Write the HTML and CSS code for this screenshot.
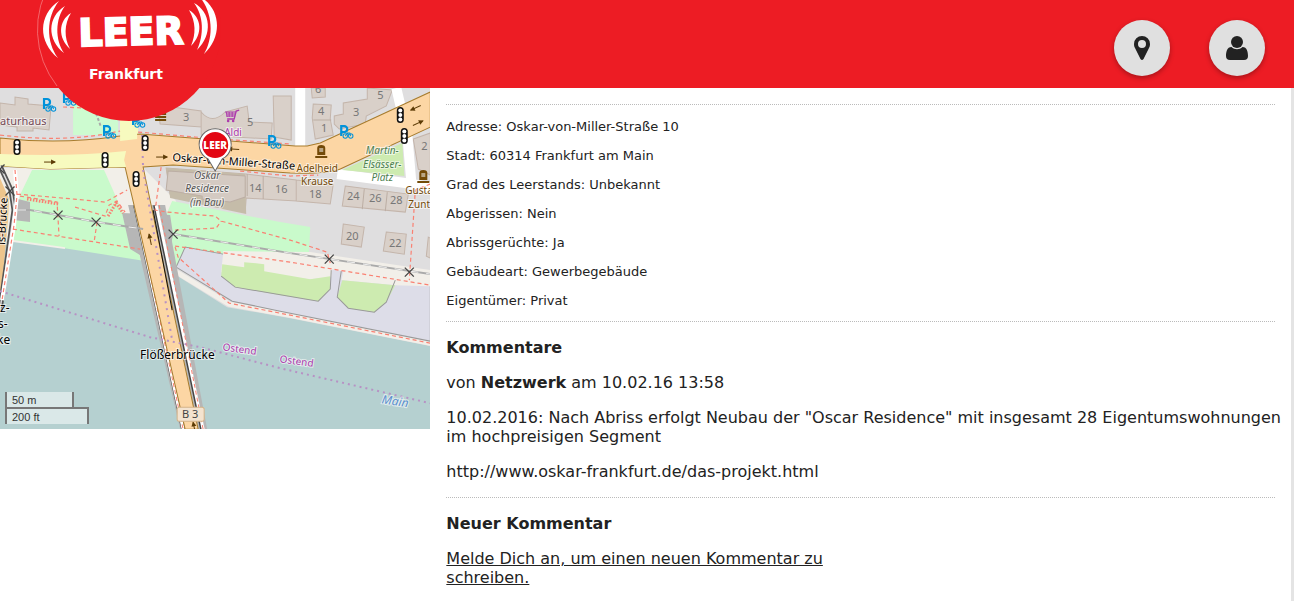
FILE: index.html
```html
<!DOCTYPE html>
<html lang="de">
<head>
<meta charset="utf-8">
<meta name="viewport" content="width=device-width, initial-scale=1">
<title>Leerstandsmelder Frankfurt</title>
<link rel="stylesheet" href="styles.css">
</head>
<body>
<header class="topbar">
  <a class="logo" href="#" aria-label="Leer Frankfurt">
    <svg class="logo-image" viewBox="37 -63 184 184">
      <circle cx="129" cy="29" r="92" fill="#ed1c24"/>
      <path d="M52-20A91.500 91.500 0 0 0 57 86" fill="none" stroke="#f6868b" stroke-width=".7"/>
      <g fill="#fff">
        <path d="M59 1C38 15 38 42 58 58C46 42 46 17 59 1Z"/>
        <path d="M65 6C47 17 47 40 64 53C55 40 55 19 65 6Z"/>
        <path d="M71 13C58 21 58 38 70 49C64 38 64 24 71 13Z"/>
        <path d="M199-4C221 8 223 36 204 54C214 37 213 12 199-4Z"/>
        <path d="M194 3C211 12 213 35 197 50C204 35 204 16 194 3Z"/>
        <path d="M189 10C202 18 203 34 191 46C196 34 196 22 189 10Z"/>
      </g>
      <text class="logo-word" x="131" y="45" text-anchor="middle" transform="rotate(-1.500 131 31)">LEER</text>
      <text class="logo-city" x="126" y="79" text-anchor="middle">Frankfurt</text>
    </svg>
  </a>
  <nav class="actions">
    <button class="round" type="button" aria-label="Karte">
      <svg width="16" height="24" viewBox="0 0 16 24"><path fill="#222" fill-rule="evenodd" d="M8 0A8 8 0 0 0 0 8C0 10 .5 11 1 12L6.500 23Q8 25 9.500 23L15 12C15.500 11 16 10 16 8A8 8 0 0 0 8 0ZM8 4A4 4 0 1 1 8 12A4 4 0 0 1 8 4Z"/></svg>
    </button>
    <button class="round" type="button" aria-label="Benutzer">
      <svg width="22" height="24" viewBox="0 0 22 24"><g fill="#222"><circle cx="11" cy="6" r="6"/><path d="M5.500 11C8.500 14 13.500 14 16.500 11C21 11 22 16 22 20Q22 24 18 24H4Q0 24 0 20C0 16 1 11 5.500 11Z"/></g></svg>
    </button>
  </nav>
</header>

<main class="page">
  <section class="map" aria-label="Karte">
    <svg class="map-image" viewBox="0 88 430 341">
      <defs>
        <g id="signal"><rect x="-3.500" y="-8" width="7" height="16" rx="3.500" fill="#111"/><g fill="#fff"><circle cy="-4.500" r="2"/><circle r="2"/><circle cy="4.500" r="2"/></g></g>
        <g id="bike" fill="none" stroke="#0092da"><path d="M-4 4V-6H-1A3 3 0 0 1-1 0H-4" stroke-width="2.200"/><circle cx="0" cy="4" r="2.200"/><circle cx="5.500" cy="4" r="2.200"/><path d="M0 4L2 1L4.500 1L5.500 4M2 1L3.500 3"/></g>
        <g id="gate"><path d="M-4.500-4.500L4.500 4.500M4.500-4.500L-4.500 4.500" stroke="#444" stroke-width="1.300"/></g>
        <g id="arrow"><path d="M-6 0H5" stroke="#5c3b05"/><path d="M6 0L1-2.500V2.500Z" fill="#5c3b05"/></g>
        <g id="monument" fill="#734a08"><path d="M-4 4V-3Q-4-6 0-6T4-3V4ZM-6 5H6V7H-6Z"/><path d="M-2-2H2M-2 0H2" stroke="#fff"/></g>
      </defs>
      <rect y="88" width="430" height="341" fill="#dfdedf"/>

      <path d="M73 103H118V135H73Z" fill="#cdfbd0"/>
      <path d="M0 168H143L176 201L165 273L0 242Z" fill="#f2efe9"/>
      <path d="M32 170H104L123 213L142 262L13 241L20 195Z" fill="#c9facb"/>
      <path d="M172 201L280 222L310 227L308 266L185 249L173 275L155 265L166 215Z" fill="#c9facb"/>
      <path d="M310 252L430 270V287L223 264V251Z" fill="#f2efe9"/>
      <path d="M0 240L13 241L63 248L140 260L173 273L227 307L290 318L430 346V429H0Z" fill="#b5d0d0"/>
      <path d="M173 270L229 304L290 315L430 343" fill="none" stroke="#f2efe9" stroke-width="5"/>
      <path d="M13 241L65 248" stroke="#f2efe9" stroke-width="2"/>
      <path d="M185 247L176 267L232 301L280 311L430 341V284L342 270L223 254Z" fill="#dddde8" stroke="#999"/>
      <path d="M223 253L430 274V286L395 285L342 280L331 277L310 279L221 272Z" fill="#f2efe9"/>
      <path d="M332 269L343 271L340 286H330Z" fill="#dddde8"/>
      <path d="M222 264L244 267V262L264 264V271L310 279L330 276V289L318 301L280 295L235 287L221 276ZM342 280L395 285L386 302L374 312L348 308L337 297Z" fill="#cdebb0"/>
      <path d="M221 276L235 287L318 301L330 289L331 270M341 271L337 297L348 308L374 312L386 302L395 280" fill="none" stroke="#999"/>
      <path d="M18 199L30 202V222L13 220ZM122 213L170 215L173 235L168 255L145 258L130 249Z" fill="#b6b6b6"/>

      <g fill="#d9d0c9" stroke="#c4b5ab">
        <path d="M0 103L15 105V97L28 99V104L51 106L49 130L33 128V131H17V127L0 125Z"/>
        <path d="M158 110L172 107L201 111V127L160 124ZM201 112Q212 125 225 112L247 106L249 122L272 123L271 139L201 135Z"/>
        <path d="M273 96H291V140L274 137ZM311 88H325V97L312 98ZM313 104L331 105L330 119L333 135L315 139L312 118ZM334 124V116L343 114V103L367 99V88L392 90L386 106L366 116L365 124L339 129Z"/>
        <path d="M166 168L246 174L296 180V201L246 198L245 212L230 200L170 194ZM296 180L333 184L330 204L296 201ZM345 186L408 194L405 212L342 206ZM343 224L364 227L361 247L341 244ZM386 232L406 234L404 254L383 251ZM413 139L430 133V175L418 169ZM428 237L430 238V258L426 256Z"/>
      </g>
      <path d="M166 168L245 174L246 214L170 198Z" fill="#c5bca9"/>
      <path d="M168 171L245 176V197L230 202L202 199V196L166 190Z" fill="#d4cac2" stroke="#bcaea4"/>
      <path d="M247 174V196M263 176V199M313 120H331M364 189L362 209M387 192L385 211" stroke="#bcaea4"/>

      <path d="M300 88V150M396 88L407 135L411 182M337 174L405 183L430 187" fill="none" stroke="#fff" stroke-width="10"/>
      <path d="M402 143L404 176L342 170Z" fill="#cdebb0"/>

      <path d="M128 205L180 429H207L165 205Z" fill="#b6b6b6"/>
      <path d="M135 205L183 429M155 205L202 429" fill="none" stroke="#444" stroke-width="4"/>
      <path d="M135 205L183 429M156 205L203 429" fill="none" stroke="#fff" stroke-width="3"/>
      <path d="M135 205L183 429M159 205L203 429" fill="none" stroke="#fa8072" stroke-dasharray="4 3"/>
      <path d="M120 118H138V140H120Z" fill="#f7fabf"/>
      <path d="M0 138Q60 145 120 136L140 134L295 146H307L320 143L430 92V127L340 169Q328 174 290 173L173 165L143 167L198 429H185L137 218L125 167L50 169L0 166Z" fill="#fcd6a4" stroke="#a77c2d"/>
      <path d="M0 154Q70 157 126 151L124 160L126 167L50 169L0 166Z" fill="#f7fabf"/>
      <path d="M120 120H137V139L120 141Z" fill="#f7fabf"/>
      <path d="M153 210L172 310" stroke="#111"/>
      <path d="M142 135L143 170L172 340" fill="none" stroke="#b791c4" stroke-width="2" stroke-dasharray="2 5"/>

      <path d="M0 178L9 199L8 220L0 305Z" fill="#eec58c"/>
      <path d="M0 166L11 190L14 210L0 310" fill="none" stroke="#555" stroke-width="5"/>
      <path d="M0 166L11 190L14 210L0 310" fill="none" stroke="#ddd" stroke-width="1.500"/>
      <path d="M15 170L17 195L14 225L2 300" fill="none" stroke="#fff" stroke-width="4"/>
      <path d="M18 210L30 210L97 222L143 229M173 234L290 253L330 259L430 274" fill="none" stroke="#aaa" stroke-width="2"/>
      <path d="M18 210L30 210L97 222L143 229M173 234L290 253L330 259L430 274" fill="none" stroke="#eee" stroke-dasharray="8 8"/>

      <g fill="none" stroke="#fa8072" stroke-width="1.200" stroke-dasharray="4 3">
        <path d="M0 135Q60 142 105 134L120 131M138 132L195 137L290 144M63 107L83 108"/>
        <path d="M15 170L17 195L14 225L2 300M17 194L74 199L105 202L127 190M20 196L57 202L59 236M75 207L105 216L109 205L117 201L125 212M13 229L140 249M97 222L94 242M161 167L155 210L167 212L215 216L221 221L290 240L327 252L330 263M175 230L216 228L221 221M175 246L290 262L430 285M175 247L178 257L229 303L290 315L430 343M430 184L415 190L409 280M240 171L290 176L318 175"/>
      </g>
      <path d="M27 199L59 204M108 216L116 203L123 213" fill="none" stroke="#fa8072" stroke-width="3" stroke-dasharray="1.500 1.500"/>
      <path d="M0 291L150 337L200 347L280 368L430 403" fill="none" stroke="#b791c4" stroke-width="2" stroke-dasharray="2 4"/>
      <path d="M80 105L94 108L101 127" fill="none" stroke="#aaa" stroke-width="2" stroke-dasharray="3 2"/>

      <use href="#bike" x="48" y="105"/><use href="#bike" x="68" y="99"/><use href="#bike" x="108" y="132"/><use href="#bike" x="137" y="121"/><use href="#bike" x="273" y="142"/><use href="#bike" x="345" y="132"/>
      <use href="#signal" x="17" y="147"/><use href="#signal" x="105" y="160"/><use href="#signal" x="145" y="143"/><use href="#signal" x="136" y="179"/><use href="#signal" x="400" y="115"/><use href="#signal" x="404" y="136"/>
      <use href="#gate" x="0" y="169"/><use href="#gate" x="10" y="191"/><use href="#gate" x="58" y="215"/><use href="#gate" x="96" y="222"/><use href="#gate" x="173" y="234"/><use href="#gate" x="329" y="259"/><use href="#gate" x="409" y="272"/>
      <use href="#arrow" x="50" y="162"/><use href="#arrow" x="162" y="157"/><use href="#arrow" transform="translate(233 149) rotate(184)"/><use href="#arrow" transform="translate(415 108) rotate(155)"/><use href="#arrow" transform="translate(418 123) rotate(-25)"/><use href="#arrow" transform="translate(150 239) rotate(-102)"/><use href="#arrow" transform="translate(194 427) rotate(-102)"/>
      <use href="#monument" x="321" y="151"/><use href="#monument" x="423" y="176"/>
      <path d="M155 114H166M155 117H166M155 120H166" stroke="#734a08" stroke-width="2"/>
      <g fill="none" stroke="#ac39ac"><path d="M239 110L236 111L234 119H227" stroke-width="1.300"/><path d="M225 112H236M226 114H235M226 116H235M226 112L227 117M229 112V117M232 112V117"/></g><g fill="#ac39ac"><circle cx="228" cy="121" r="1.300"/><circle cx="233" cy="121" r="1.300"/></g>

      <g class="map-number">
        <text x="186" y="121">3</text><text x="250" y="126">5</text><text x="318" y="93">6</text><text x="380" y="99">5</text><text x="321" y="115">4</text><text x="356" y="116">3</text><text x="324" y="132">1</text><text x="424" y="150">2</text><text x="255" y="192">14</text><text x="281" y="193">16</text><text x="315" y="198">18</text><text x="353" y="200">24</text><text x="375" y="202">26</text><text x="396" y="204">28</text><text x="352" y="240">20</text><text x="395" y="247">22</text>
      </g>
      <g class="map-label">
        <text class="place" x="0" y="125">aturhaus</text>
        <text class="shop" x="224" y="136">Aldi</text>
        <text class="street long" x="172" y="161" transform="rotate(4 172 161)">Oskar-von-Miller-Straße</text>
        <g class="memorial" text-anchor="middle"><text x="317" y="172">Adelheid</text><text x="317" y="185">Krause</text></g>
        <g class="memorial"><text x="405" y="194">Gusta</text><text x="408" y="208">Zunt</text></g>
        <g class="park" text-anchor="middle"><text x="382" y="154">Martin-</text><text x="382" y="168">Elsässer-</text><text x="382" y="181">Platz</text></g>
        <g class="house" text-anchor="middle"><text x="207" y="179">Oskar</text><text x="207" y="192">Residence</text><text x="207" y="206">(in Bau)</text></g>
        <text class="street" x="140" y="359">Flößerbrücke</text>
        <text class="street" x="0" y="312">z-</text><text class="street" x="-2" y="328">s-</text><text class="street" x="-3" y="344">ke</text>
        <text class="street long" x="5" y="245" transform="rotate(-87 5 245)">ls-Brücke</text>
        <text class="shop" x="222" y="350" transform="rotate(8 222 350)">Ostend</text>
        <text class="shop" x="279" y="362" transform="rotate(8 279 362)">Ostend</text>
        <text class="river" x="381" y="403" transform="rotate(9 381 403)">Main</text>
      </g>
      <rect x="177" y="407" width="27" height="14" rx="2" fill="#f4e3cf" stroke="#d4b48a"/>
      <text class="route" x="190" y="418" text-anchor="middle">B 3</text>

      <path d="M215 171L208 159A16 16 0 1 1 222 159Z" fill="#fff" stroke="#666"/>
      <circle cx="215" cy="145" r="13" fill="#e30613"/>
      <text class="pin-word" x="215" y="149" text-anchor="middle">LEER</text>
    </svg>
    <div class="scale">
      <div class="scale-line metric">50 m</div>
      <div class="scale-line imperial">200 ft</div>
    </div>
  </section>

  <article class="details">
    <section class="facts">
      <p>Adresse: Oskar-von-Miller-Straße 10</p>
      <p>Stadt: 60314 Frankfurt am Main</p>
      <p>Grad des Leerstands: Unbekannt</p>
      <p>Abgerissen: Nein</p>
      <p>Abrissgerüchte: Ja</p>
      <p>Gebäudeart: Gewerbegebäude</p>
      <p>Eigentümer: Privat</p>
    </section>
    <section class="block">
      <h2>Kommentare</h2>
      <p>von <strong>Netzwerk</strong> am 10.02.16 13:58</p>
      <p class="comment">10.02.2016: Nach Abriss erfolgt Neubau der "Oscar Residence" mit insgesamt 28 Eigentumswohnungen im hochpreisigen Segment</p>
      <p>http://www.oskar-frankfurt.de/das-projekt.html</p>
    </section>
    <section class="block">
      <h2>Neuer Kommentar</h2>
      <p class="login"><a href="#">Melde Dich an, um einen neuen Kommentar zu schreiben.</a></p>
    </section>
  </article>
</main>
</body>
</html>
```
FILE: styles.css
```css
* { box-sizing: border-box; }

body {
  margin: 0;
  min-height: 100vh;
  display: flex;
  flex-direction: column;
  background: #fff;
  color: #222;
  font: 16px/19px "DejaVu Sans", Verdana, sans-serif;
}

.topbar {
  position: relative;
  z-index: 1;
  display: flex;
  justify-content: flex-end;
  align-items: flex-start;
  height: 88px;
  padding: 20px 29px 12px;
  background: #ed1c24;
}

.logo {
  position: absolute;
  left: 37px;
  bottom: -33px;
  width: 184px;
  height: 184px;
  clip-path: inset(63px 0 0 0);
}

.logo-image { display: block; }

.logo-word {
  font: bold 38px "DejaVu Sans", sans-serif;
  fill: #fff;
  stroke: #fff;
  stroke-width: 2px;
}

.logo-city { font: bold 14px "DejaVu Sans", sans-serif; fill: #fff; }

.actions { display: flex; gap: 39px; }

.round {
  display: grid;
  place-items: center;
  width: 56px;
  height: 56px;
  padding: 0;
  border: 0;
  border-radius: 50%;
  background: #e0e0e0;
  box-shadow: 0 2px 5px rgba(0, 0, 0, .3);
  cursor: pointer;
}

.page {
  flex: 1;
  display: grid;
  grid-template-columns: 1fr 2fr;
  align-items: start;
  border-right: 3px solid #e4e4e4;
}

.map { position: relative; }
.map-image { display: block; width: 100%; }

.map-number {
  font: 11px "Noto Sans", sans-serif;
  fill: #777;
  text-anchor: middle;
}

.map-label {
  font: 11px "Noto Sans", sans-serif;
  paint-order: stroke;
  stroke: rgba(255, 255, 255, .6);
  stroke-width: 2px;
}

.place { fill: #734a58; }
.shop { font-size: 10px; fill: #ac39ac; }
.street { font-size: 12px; fill: #000; }
.long { font-size: 11px; }
.memorial { font-size: 10px; fill: #734a08; }
.park { font-size: 10px; font-style: italic; fill: #4c8050; }
.house { font-size: 10px; font-style: italic; fill: #555; }
.river { font-size: 12px; font-style: italic; fill: #5b8fce; }
.route { font: 11px "Noto Sans", sans-serif; fill: #444; }
.pin-word { font: 800 10px "Open Sans", sans-serif; fill: #fff; }

.scale {
  position: absolute;
  left: 5px;
  bottom: 5px;
  color: #333;
  font: 11px/12px "Liberation Sans", Arial, sans-serif;
}

.scale-line {
  padding: 2px 5px 1px;
  border: 2px solid #777;
  border-top: 0;
  background: rgba(255, 255, 255, .5);
}

.metric { width: 69px; }

.imperial {
  width: 84px;
  margin-top: -2px;
  border-top: 2px solid #777;
  border-bottom: 0;
}

.details { padding: 16px 16px 0; }

.facts,
.block { border-top: 1px dotted #bbb; }

.facts {
  padding: 14px 0 12px;
  font-size: 13px;
  line-height: 16px;
}

.facts p { margin: 0 0 13px; }
.facts p:last-child { margin-bottom: 0; }

.block {
  display: flex;
  flex-direction: column;
  gap: 16px;
  padding: 16px 0;
}

.block:last-child { padding-bottom: 0; }

.block h2,
.block p { margin: 0; }

.block h2 { font-size: 16px; }
.block .comment { margin-right: -12px; }
.login { max-width: 50%; }
.login a { color: inherit; }
```
